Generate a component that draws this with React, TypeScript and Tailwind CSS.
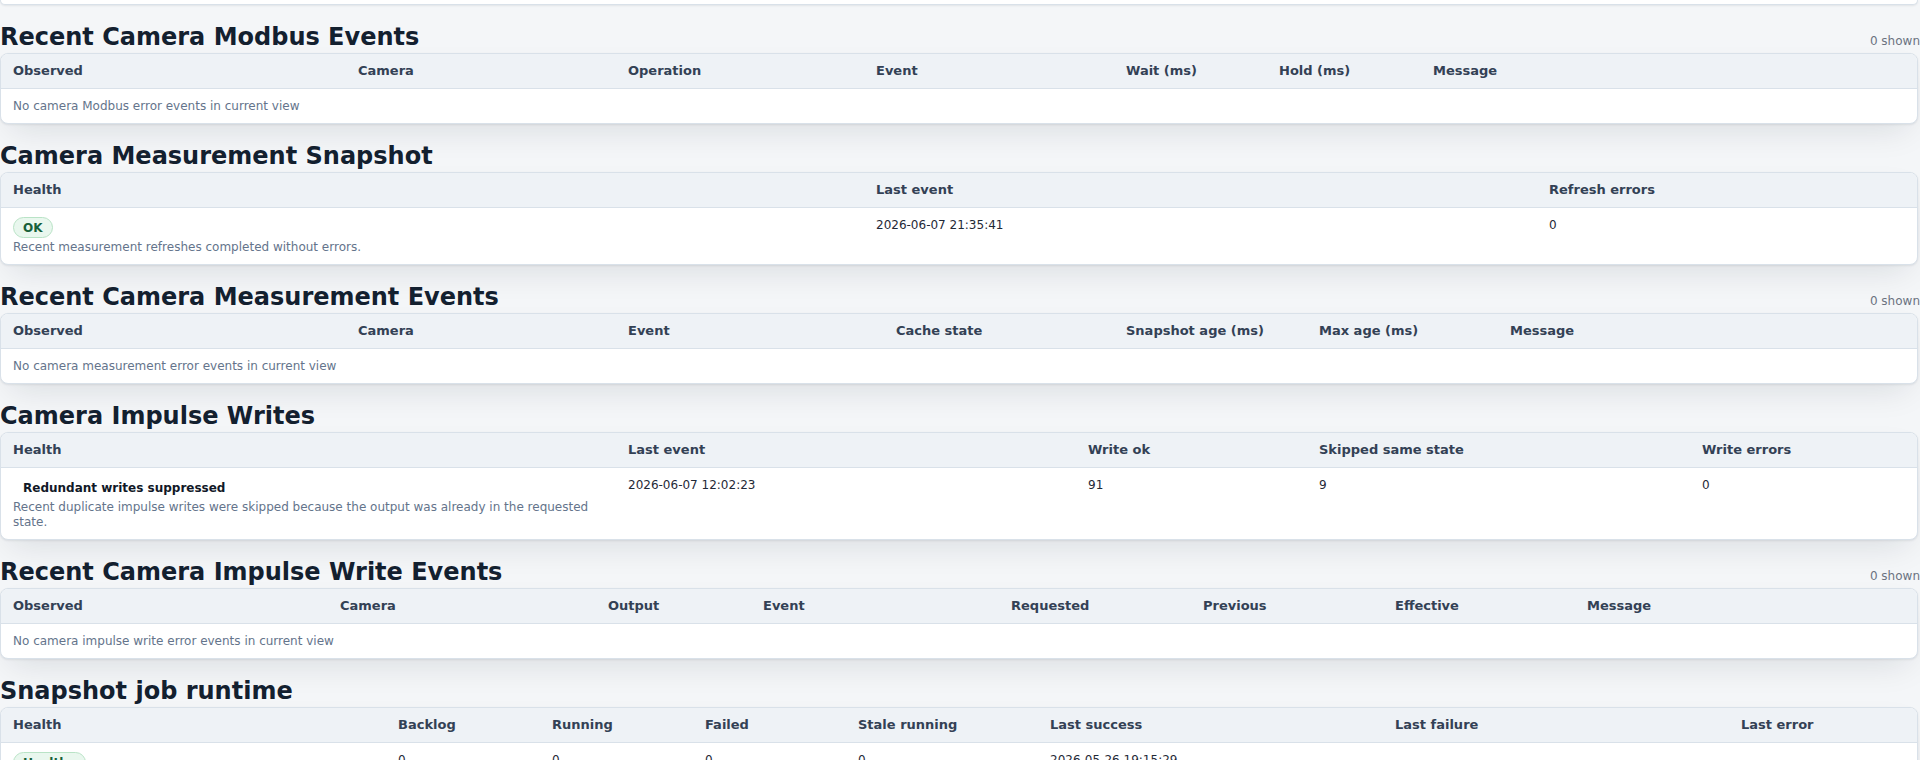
import React from "react";

type Col = { label: string; w?: string };

const card =
  "mr-[2px] overflow-hidden rounded-lg border border-[#d9e1e9] bg-white shadow-[0_1px_2px_rgba(15,23,42,0.08),0_14px_34px_-10px_rgba(15,23,42,0.12)]";

function Section({
  title,
  count,
  children,
}: {
  title: string;
  count?: string;
  children: React.ReactNode;
}) {
  return (
    <section className="mt-4">
      <div className="flex items-baseline justify-between">
        <h2 className="text-2xl font-bold leading-8 text-[#13202f]">{title}</h2>
        {count ? <span className="text-xs text-[#6b7280]">{count}</span> : null}
      </div>
      <div className={card}>{children}</div>
    </section>
  );
}

function Table({ cols, children }: { cols: Col[]; children: React.ReactNode }) {
  return (
    <table className="w-full table-fixed border-collapse">
      <thead>
        <tr>
          {cols.map((c) => (
            <th
              key={c.label}
              className={`${c.w ?? ""} border-b border-[#d9e1e9] bg-[#eef2f6] px-3 py-[9px] text-left text-[13px] font-bold leading-4 text-[#334155]`}
            >
              {c.label}
            </th>
          ))}
        </tr>
      </thead>
      <tbody>{children}</tbody>
    </table>
  );
}

function EmptyRow({ span, text }: { span: number; text: string }) {
  return (
    <tr>
      <td colSpan={span} className="px-3 py-[9px] text-xs leading-4 text-[#64748b]">
        {text}
      </td>
    </tr>
  );
}

function Cell({ children }: { children?: React.ReactNode }) {
  return <td className="px-3 py-[9px] align-top text-xs leading-4 text-[#1f2937]">{children}</td>;
}

function Badge({ tone, children }: { tone: "ok" | "plain"; children: React.ReactNode }) {
  const toneCls =
    tone === "ok"
      ? "border-[#b9e3c6] bg-[#e9f7ee] text-[#17603a]"
      : "border-transparent text-[#111827]";
  return (
    <span
      className={`inline-flex h-[21px] items-center rounded-full border px-[9px] text-xs font-bold leading-4 ${toneCls}`}
    >
      {children}
    </span>
  );
}

function Health({
  tone,
  label,
  note,
}: {
  tone: "ok" | "plain";
  label: string;
  note?: string;
}) {
  return (
    <td className="px-3 py-[9px] align-top text-xs">
      <Badge tone={tone}>{label}</Badge>
      {note ? <div className="mt-[2px] leading-[15px] text-[#64748b]">{note}</div> : null}
    </td>
  );
}

export default function App() {
  return (
    <div className="min-h-screen bg-[#f4f6f8] font-['DejaVu_Sans','Liberation_Sans',sans-serif]">
      {/* tail of the panel above */}
      <div className="mr-[2px] h-[5px] rounded-b-lg border border-t-0 border-[#d9e1e9] bg-white shadow-[0_1px_2px_rgba(15,23,42,0.08),0_14px_34px_-10px_rgba(15,23,42,0.12)]" />

      <Section title="Recent Camera Modbus Events" count="0 shown">
        <Table
          cols={[
            { label: "Observed", w: "w-[345px]" },
            { label: "Camera", w: "w-[270px]" },
            { label: "Operation", w: "w-[248px]" },
            { label: "Event", w: "w-[250px]" },
            { label: "Wait (ms)", w: "w-[153px]" },
            { label: "Hold (ms)", w: "w-[154px]" },
            { label: "Message" },
          ]}
        >
          <EmptyRow span={7} text="No camera Modbus error events in current view" />
        </Table>
      </Section>

      <Section title="Camera Measurement Snapshot">
        <Table
          cols={[
            { label: "Health", w: "w-[863px]" },
            { label: "Last event", w: "w-[673px]" },
            { label: "Refresh errors" },
          ]}
        >
          <tr>
            <Health tone="ok" label="OK" note="Recent measurement refreshes completed without errors." />
            <Cell>2026-06-07 21:35:41</Cell>
            <Cell>0</Cell>
          </tr>
        </Table>
      </Section>

      <Section title="Recent Camera Measurement Events" count="0 shown">
        <Table
          cols={[
            { label: "Observed", w: "w-[345px]" },
            { label: "Camera", w: "w-[270px]" },
            { label: "Event", w: "w-[268px]" },
            { label: "Cache state", w: "w-[230px]" },
            { label: "Snapshot age (ms)", w: "w-[193px]" },
            { label: "Max age (ms)", w: "w-[191px]" },
            { label: "Message" },
          ]}
        >
          <EmptyRow span={7} text="No camera measurement error events in current view" />
        </Table>
      </Section>

      <Section title="Camera Impulse Writes">
        <Table
          cols={[
            { label: "Health", w: "w-[615px]" },
            { label: "Last event", w: "w-[460px]" },
            { label: "Write ok", w: "w-[231px]" },
            { label: "Skipped same state", w: "w-[383px]" },
            { label: "Write errors" },
          ]}
        >
          <tr>
            <Health
              tone="plain"
              label="Redundant writes suppressed"
              note="Recent duplicate impulse writes were skipped because the output was already in the requested state."
            />
            <Cell>2026-06-07 12:02:23</Cell>
            <Cell>91</Cell>
            <Cell>9</Cell>
            <Cell>0</Cell>
          </tr>
        </Table>
      </Section>

      <Section title="Recent Camera Impulse Write Events" count="0 shown">
        <Table
          cols={[
            { label: "Observed", w: "w-[327px]" },
            { label: "Camera", w: "w-[268px]" },
            { label: "Output", w: "w-[155px]" },
            { label: "Event", w: "w-[248px]" },
            { label: "Requested", w: "w-[192px]" },
            { label: "Previous", w: "w-[192px]" },
            { label: "Effective", w: "w-[192px]" },
            { label: "Message" },
          ]}
        >
          <EmptyRow span={8} text="No camera impulse write error events in current view" />
        </Table>
      </Section>

      <Section title="Snapshot job runtime">
        <Table
          cols={[
            { label: "Health", w: "w-[385px]" },
            { label: "Backlog", w: "w-[154px]" },
            { label: "Running", w: "w-[153px]" },
            { label: "Failed", w: "w-[153px]" },
            { label: "Stale running", w: "w-[192px]" },
            { label: "Last success", w: "w-[345px]" },
            { label: "Last failure", w: "w-[346px]" },
            { label: "Last error" },
          ]}
        >
          <tr>
            <Health tone="ok" label="Healthy" note="Snapshot jobs are processing normally." />
            <Cell>0</Cell>
            <Cell>0</Cell>
            <Cell>0</Cell>
            <Cell>0</Cell>
            <Cell>2026-05-26 19:15:29</Cell>
            <Cell>—</Cell>
            <Cell>—</Cell>
          </tr>
        </Table>
      </Section>
      <div className="h-8" />
    </div>
  );
}
